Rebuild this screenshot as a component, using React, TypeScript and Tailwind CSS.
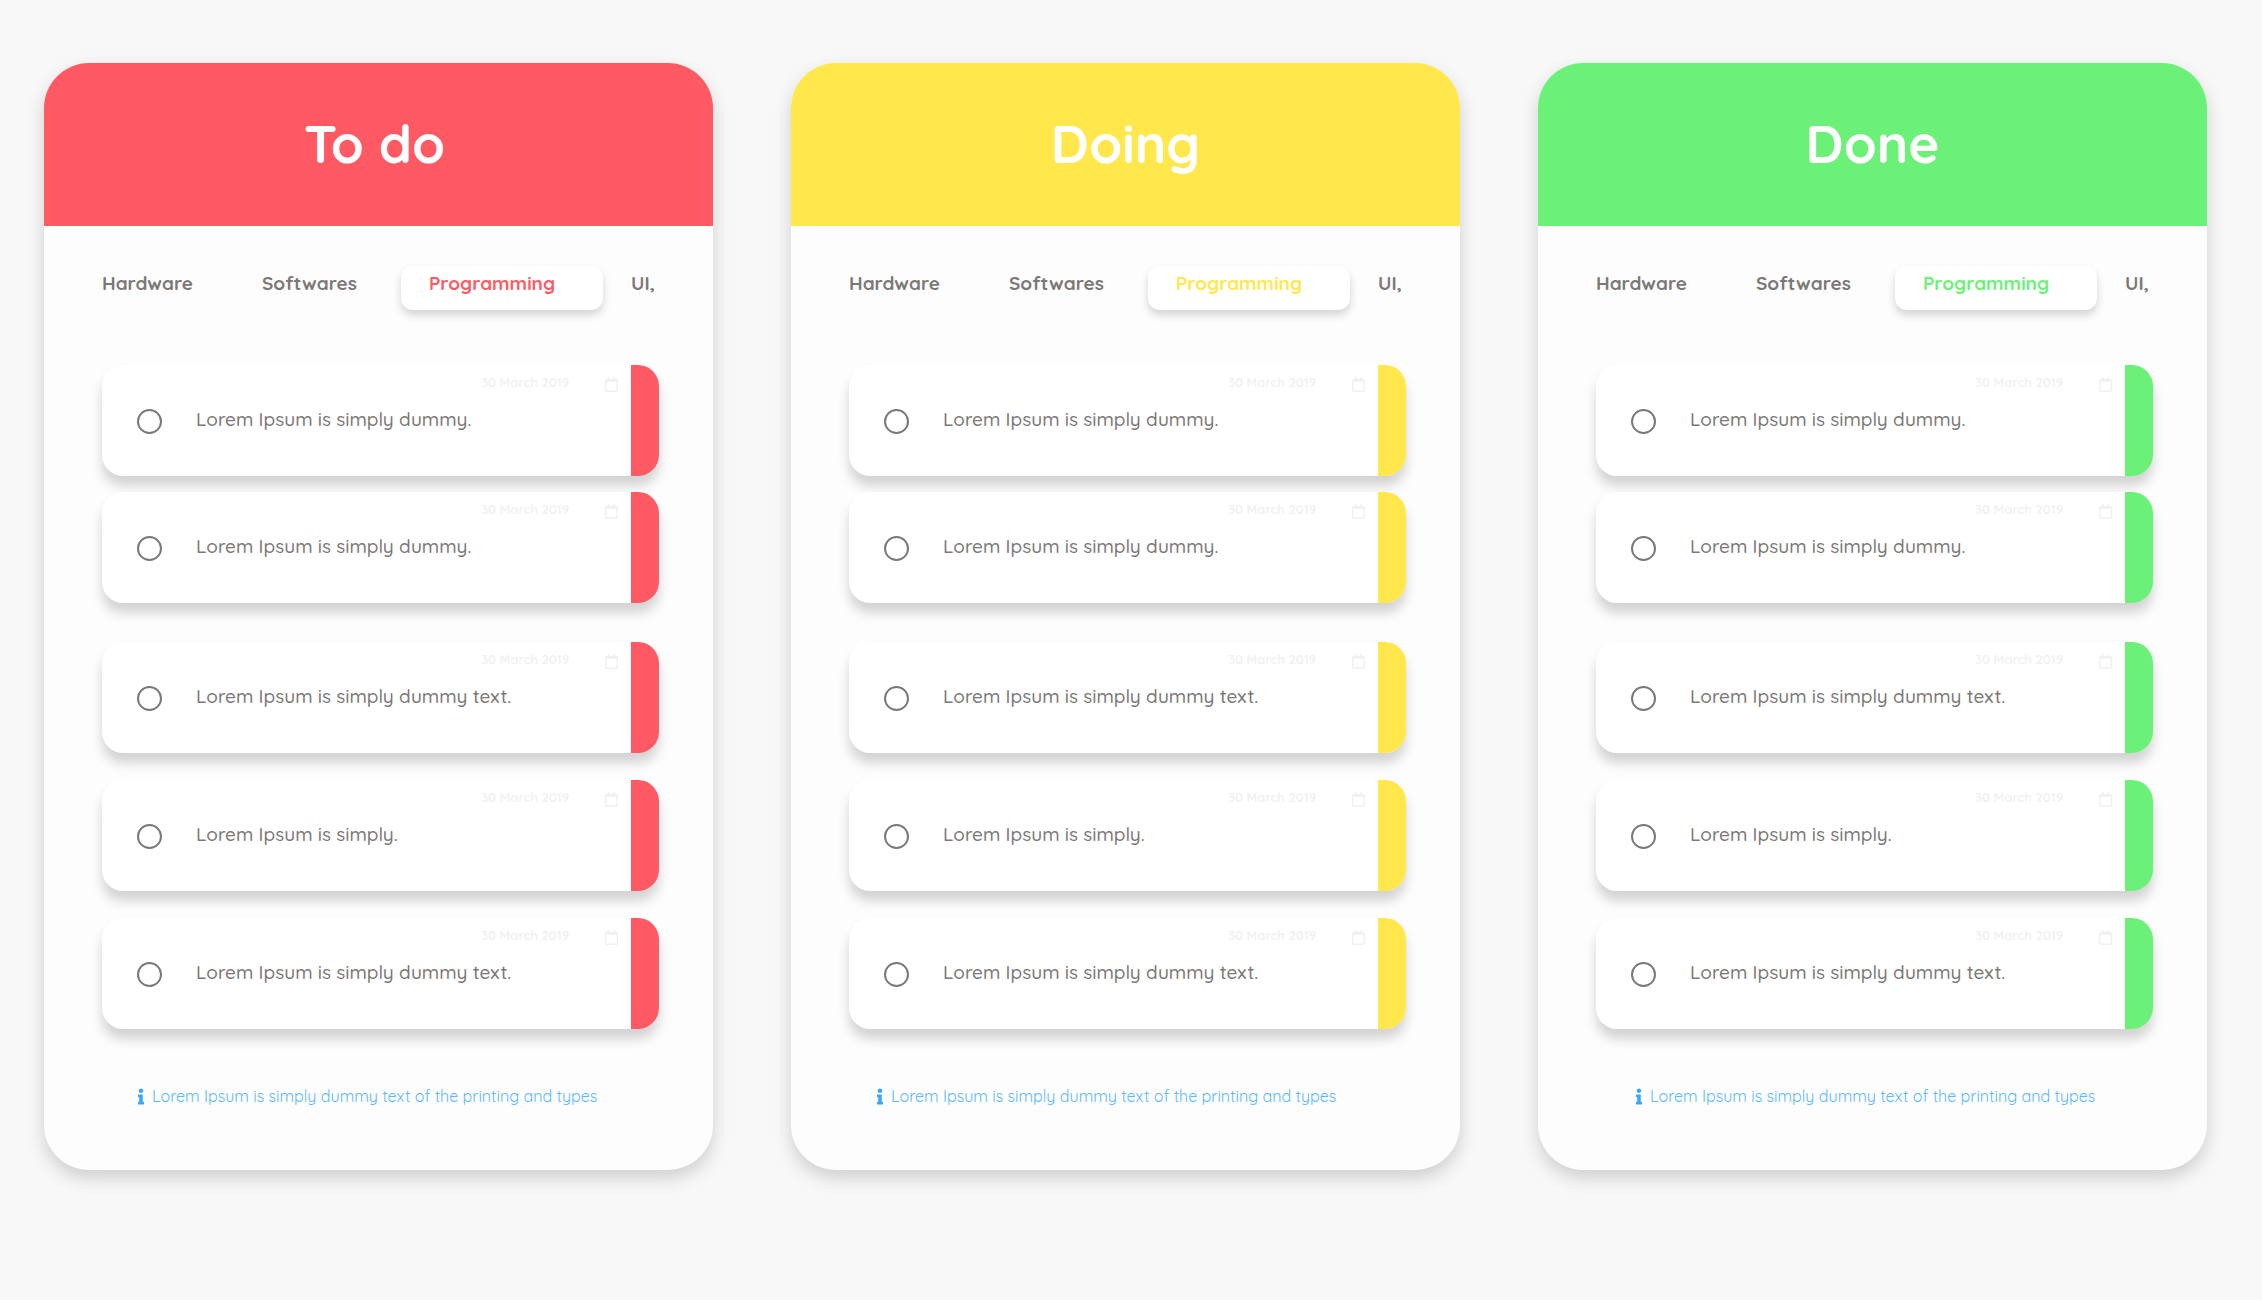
import { FaInfo, FaRegCalendar } from "react-icons/fa";

type Column = {
  id: string;
  title: string;
  fill: string;
  activeText: string;
  titlePadding: string;
  notePadding: string;
};

const columns: Column[] = [
  { id: "todo", title: "To do", fill: "bg-[#ff5964]", activeText: "text-[#ff5964]", titlePadding: "pr-2", notePadding: "pl-9" },
  { id: "doing", title: "Doing", fill: "bg-[#ffe74c]", activeText: "text-[#ffe74c]", titlePadding: "", notePadding: "pl-7" },
  { id: "done", title: "Done", fill: "bg-[#6bf178]", activeText: "text-[#6bf178]", titlePadding: "", notePadding: "pl-10" },
];

const tasks = [
  { text: "Lorem Ipsum is simply dummy.", spacing: "" },
  { text: "Lorem Ipsum is simply dummy.", spacing: "mt-4" },
  { text: "Lorem Ipsum is simply dummy text.", spacing: "mt-[39px]" },
  { text: "Lorem Ipsum is simply.", spacing: "mt-[27px]" },
  { text: "Lorem Ipsum is simply dummy text.", spacing: "mt-[27px]" },
];

function Tabs({ column }: { column: Column }) {
  return (
    <nav className="mr-[5px] flex overflow-x-clip text-[19px] font-bold whitespace-nowrap text-[#7c7877]">
      <button type="button" className="h-11 shrink-0 pr-[41px] pb-2.5">Hardware</button>
      <button type="button" className="h-11 shrink-0 pr-11 pb-2.5 pl-7">Softwares</button>
      <button
        type="button"
        aria-current="true"
        className={`h-11 shrink-0 rounded-xl bg-white pr-12 pb-2.5 pl-7 shadow-[0_5px_8px_rgba(0,0,0,0.17)] ${column.activeText}`}
      >
        Programming
      </button>
      <button type="button" className="h-11 shrink-0 pb-2.5 pl-7">UI,</button>
    </nav>
  );
}

function Task({ id, text, spacing, fill }: { id: string; text: string; spacing: string; fill: string }) {
  return (
    <li className={`flex overflow-hidden rounded-[21px] bg-white shadow-[0_10px_12px_rgba(0,0,0,0.17)] ${spacing}`}>
      <div className="min-w-0 flex-1 pb-[37px]">
        <div className="flex h-[38px] items-center justify-end gap-9 pr-[13px] text-[#f0f0f0]">
          <time dateTime="2019-03-30" className="pb-1 text-[13px] leading-4 font-semibold">30 March 2019</time>
          <FaRegCalendar className="h-[15px] w-[13px]" />
        </div>
        <div className="flex h-9 items-center gap-[34px] pl-[35px]">
          <input
            id={id}
            type="radio"
            className="size-[25px] shrink-0 appearance-none rounded-full border-2 border-[#7c7877] checked:bg-[#7c7877]"
          />
          <label htmlFor={id} className="pb-1 text-[19px] leading-8 font-medium text-[#7c7877]">{text}</label>
        </div>
      </div>
      <div className={`w-7 ${fill}`} />
    </li>
  );
}

export default function App() {
  return (
    <main className="grid min-h-screen grid-cols-3 items-start gap-x-[78px] bg-[#f8f8f8] pt-[63px] pr-[55px] pl-11 font-['Quicksand',sans-serif]">
      {columns.map((column) => (
        <section
          key={column.id}
          className="overflow-hidden rounded-[45px] bg-[#fdfdfd] shadow-[0_8px_18px_rgba(0,0,0,0.17)]"
        >
          <header className={`flex h-[163px] items-center justify-center pb-0.5 ${column.fill} ${column.titlePadding}`}>
            <h2 className="text-[53px] leading-none font-bold text-white">{column.title}</h2>
          </header>
          <div className="pt-10 pr-[54px] pb-[62px] pl-[58px]">
            <Tabs column={column} />
            <ul className="mt-[55px]">
              {tasks.map((task, i) => (
                <Task key={i} id={`${column.id}-${i}`} text={task.text} spacing={task.spacing} fill={column.fill} />
              ))}
            </ul>
            <p className={`mt-[55px] flex h-6 items-center gap-2 whitespace-nowrap text-[#35a7ff] ${column.notePadding}`}>
              <FaInfo className="h-[17px] w-1.5 shrink-0" />
              <span className="text-base font-normal text-[#5cb8ff]">Lorem Ipsum is simply dummy text of the printing and types</span>
            </p>
          </div>
        </section>
      ))}
    </main>
  );
}
